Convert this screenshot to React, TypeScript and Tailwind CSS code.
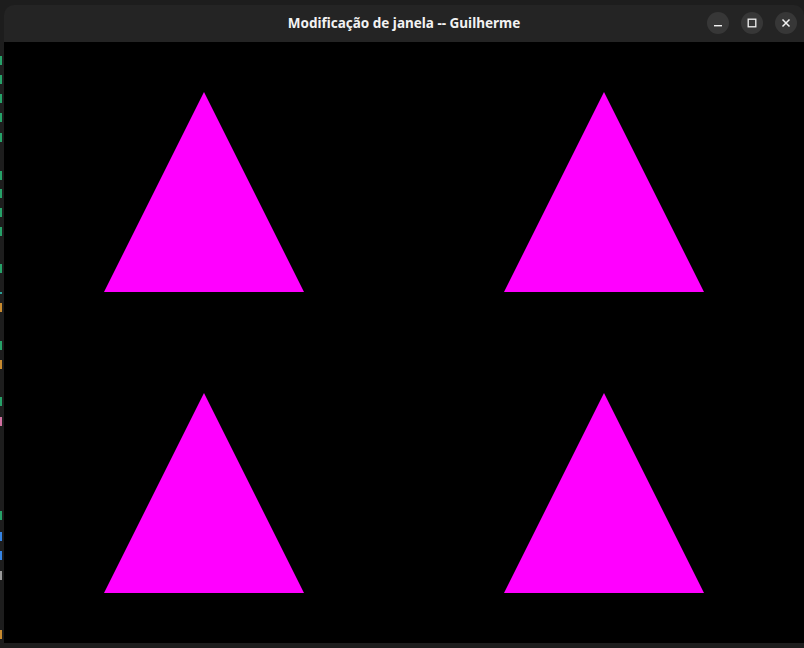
// bits of the terminal glyphs peeking out left of the window
const termMarks = [
  { y: 56, c: 'bg-[#26a269]' },
  { y: 75, c: 'bg-[#26a269]' },
  { y: 94, c: 'bg-[#26a269]' },
  { y: 113, c: 'bg-[#26a269]' },
  { y: 133, c: 'bg-[#26a269]' },
  { y: 171, c: 'bg-[#26a269]' },
  { y: 189, c: 'bg-[#26a269]' },
  { y: 208, c: 'bg-[#26a269]' },
  { y: 227, c: 'bg-[#26a269]' },
  { y: 264, c: 'bg-[#26a269]' },
  { y: 292, c: 'bg-[#2aa198]', h: 2 },
  { y: 303, c: 'bg-[#c88a2e]' },
  { y: 341, c: 'bg-[#26a269]' },
  { y: 360, c: 'bg-[#c88a2e]' },
  { y: 397, c: 'bg-[#26a269]' },
  { y: 417, c: 'bg-[#d16fa0]' },
  { y: 511, c: 'bg-[#26a269]' },
  { y: 532, c: 'bg-[#3584e4]' },
  { y: 551, c: 'bg-[#3584e4]' },
  { y: 571, c: 'bg-[#9a9a9a]' },
  { y: 630, c: 'bg-[#c88a2e]' },
];

const Triangle = () => (
  <svg width="200" height="200" viewBox="0 0 200 200" className="block">
    <polygon points="100,0 200,200 0,200" fill="#ff00ff" />
  </svg>
);

export default function App() {
  let prev = 0;
  return (
    <div className="w-[804px] h-[648px] bg-[#1d1d1d] flex overflow-hidden" style={{ fontFamily: '"Noto Sans", "Open Sans", sans-serif' }}>
      {/* terminal behind the window */}
      <div className="w-[4px] shrink-0 overflow-hidden flex flex-col items-start">
        {termMarks.map((m, i) => {
          const h = m.h ?? 9;
          const top = m.y - prev;
          prev = m.y + h;
          return <div key={i} className={`w-[2px] shrink-0 ${m.c}`} style={{ marginTop: top, height: h }} />;
        })}
      </div>

      {/* window */}
      <div className="w-[800px] shrink-0 mt-[5px] h-[638px] flex flex-col rounded-t-[10px] overflow-hidden">
        <div className="h-[37px] bg-[#242424] relative flex items-center justify-center">
          <span className="text-[13.5px] font-bold text-[#f2f2f2]">
            Modificação de janela -- Guilherme
          </span>
          <div className="absolute right-[7px] top-[7px] flex gap-[12px]">
            <div className="w-[22px] h-[22px] rounded-full bg-[#373737] flex items-center justify-center">
              <svg width="10" height="10" viewBox="0 0 10 10">
                <rect x="1" y="7" width="8" height="1.4" fill="#f2f2f2" />
              </svg>
            </div>
            <div className="w-[22px] h-[22px] rounded-full bg-[#373737] flex items-center justify-center">
              <svg width="10" height="10" viewBox="0 0 10 10">
                <rect x="1.2" y="1.2" width="7.6" height="7.6" fill="none" stroke="#f2f2f2" strokeWidth="1.3" />
              </svg>
            </div>
            <div className="w-[22px] h-[22px] rounded-full bg-[#373737] flex items-center justify-center">
              <svg width="10" height="10" viewBox="0 0 10 10">
                <path d="M1.5 1.5 L8.5 8.5 M8.5 1.5 L1.5 8.5" stroke="#f2f2f2" strokeWidth="1.5" />
              </svg>
            </div>
          </div>
        </div>
        <div className="h-[601px] bg-black grid grid-cols-2 grid-rows-2">
          <div className="flex items-center justify-center"><Triangle /></div>
          <div className="flex items-center justify-center"><Triangle /></div>
          <div className="flex items-center justify-center"><Triangle /></div>
          <div className="flex items-center justify-center"><Triangle /></div>
        </div>
      </div>
    </div>
  );
}
